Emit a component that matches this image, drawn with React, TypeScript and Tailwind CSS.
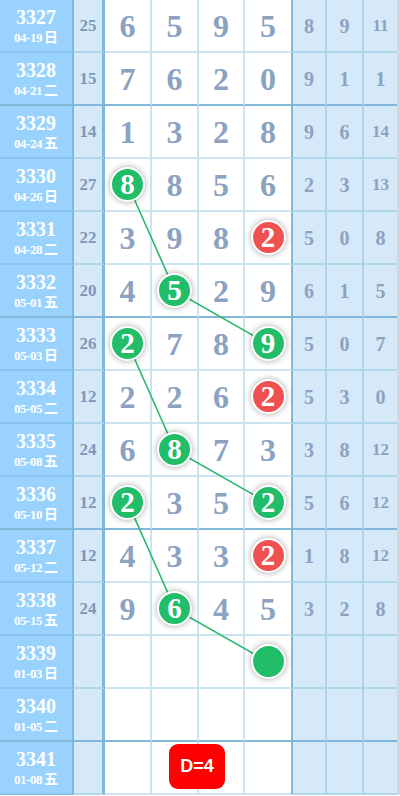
import React from 'react';

type Mark = 'g' | 'r' | 'e' | null;

interface Row {
  id: string;
  date: string;
  week: string;
  miss: string;
  nums: (number | null)[];
  marks: Mark[];
  tail: string[];
}

const rows: Row[] = [
  { id: '3327', date: '04-19', week: '日', miss: '25', nums: [6, 5, 9, 5], marks: [null, null, null, null], tail: ['8', '9', '11'] },
  { id: '3328', date: '04-21', week: '二', miss: '15', nums: [7, 6, 2, 0], marks: [null, null, null, null], tail: ['9', '1', '1'] },
  { id: '3329', date: '04-24', week: '五', miss: '14', nums: [1, 3, 2, 8], marks: [null, null, null, null], tail: ['9', '6', '14'] },
  { id: '3330', date: '04-26', week: '日', miss: '27', nums: [8, 8, 5, 6], marks: ['g', null, null, null], tail: ['2', '3', '13'] },
  { id: '3331', date: '04-28', week: '二', miss: '22', nums: [3, 9, 8, 2], marks: [null, null, null, 'r'], tail: ['5', '0', '8'] },
  { id: '3332', date: '05-01', week: '五', miss: '20', nums: [4, 5, 2, 9], marks: [null, 'g', null, null], tail: ['6', '1', '5'] },
  { id: '3333', date: '05-03', week: '日', miss: '26', nums: [2, 7, 8, 9], marks: ['g', null, null, 'g'], tail: ['5', '0', '7'] },
  { id: '3334', date: '05-05', week: '二', miss: '12', nums: [2, 2, 6, 2], marks: [null, null, null, 'r'], tail: ['5', '3', '0'] },
  { id: '3335', date: '05-08', week: '五', miss: '24', nums: [6, 8, 7, 3], marks: [null, 'g', null, null], tail: ['3', '8', '12'] },
  { id: '3336', date: '05-10', week: '日', miss: '12', nums: [2, 3, 5, 2], marks: ['g', null, null, 'g'], tail: ['5', '6', '12'] },
  { id: '3337', date: '05-12', week: '二', miss: '12', nums: [4, 3, 3, 2], marks: [null, null, null, 'r'], tail: ['1', '8', '12'] },
  { id: '3338', date: '05-15', week: '五', miss: '24', nums: [9, 6, 4, 5], marks: [null, 'g', null, null], tail: ['3', '2', '8'] },
  { id: '3339', date: '01-03', week: '日', miss: '', nums: [null, null, null, null], marks: [null, null, null, 'e'], tail: ['', '', ''] },
  { id: '3340', date: '01-05', week: '二', miss: '', nums: [null, null, null, null], marks: [null, null, null, null], tail: ['', '', ''] },
  { id: '3341', date: '01-08', week: '五', miss: '', nums: [null, null, null, null], marks: [null, null, null, null], tail: ['', '', ''] },
];

// rows that close a group of four get the darker rule
const groupEnds = [1, 5, 9, 13];

const ROW_H = 53;
const colX = [128, 175, 222, 268];

// chains of hits, [rowIndex, col]
const chains: [number, number][][] = [
  [[3, 0], [5, 1], [6, 3]],
  [[6, 0], [8, 1], [9, 3]],
  [[9, 0], [11, 1], [12, 3]],
];

const serif = "font-['Liberation_Serif','Times_New_Roman','Noto_Sans_CJK_SC',serif]";

function Ball({ mark, value }: { mark: Mark; value: number | null }) {
  const bg = mark === 'r' ? 'bg-[#ef5151]' : 'bg-[#22bd69]';
  return (
    <div
      className={`relative z-10 w-[35px] h-[35px] rounded-full border-2 border-white ${bg} shadow-[0_0_6px_rgba(0,0,0,0.35)] flex items-center justify-center text-white text-[29px] font-bold leading-none ${serif}`}
    >
      {mark === 'e' ? '' : value}
    </div>
  );
}

export default function App() {
  return (
    <div className={`relative w-[400px] bg-white border-r-[3px] border-[#cfd8df] ${serif}`}>
      {rows.map((row, i) => {
        const end = groupEnds.includes(i);
        const leftB = end ? 'border-b-[#7fb8d9]' : 'border-b-[#88c3ea]';
        const blueB = end ? 'border-b-[#7fb8d9]' : 'border-b-[#b0d6ec]';
        const whiteB = end ? 'border-b-[#7fb8d9]' : 'border-b-[#cce4f1]';
        return (
          <div
            key={row.id}
            className="relative grid grid-cols-[74px_31px_47px_47px_46px_48px_34px_37px_33px] h-[53px]"
          >
            {/* period + date */}
            <div className={`flex flex-col items-center justify-center bg-[#99d2fc] border-r-2 border-r-[#7fb8d9] border-b-2 ${leftB} text-white font-bold`}>
              <div className="text-[20px] leading-[24px]">{row.id}</div>
              <div className="flex items-center gap-[2px] leading-[18px]">
                <span className="text-[13px] tracking-[-0.5px]">{row.date}</span>
                <span className="text-[14px]">{row.week}</span>
              </div>
            </div>

            {/* missing count */}
            <div className={`flex items-center justify-center bg-[#d6e9f9] border-r-[3px] border-r-[#7fb8d9] border-b-2 ${blueB} text-[#7d97b9] text-[17px] font-bold`}>
              {row.miss}
            </div>

            {/* draw digits */}
            {row.nums.map((n, c) => (
              <div
                key={c}
                className={`flex items-center justify-center border-b-2 ${whiteB} ${
                  c === 3 ? 'border-r-2 border-r-[#7fb8d9]' : 'border-r-2 border-r-[#cce4f1]'
                } text-[#8ba2c0] text-[32px] font-bold`}
              >
                {row.marks[c] ? <Ball mark={row.marks[c]} value={n} /> : n}
              </div>
            ))}

            {/* tail stats */}
            {row.tail.map((t, c) => (
              <div
                key={c}
                className={`flex items-center justify-center bg-[#d6e9f9] border-b-2 ${blueB} ${
                  c < 2 ? 'border-r-2 border-r-[#acd4eb]' : ''
                } text-[#8ba2c0] font-bold ${t.length > 1 ? 'text-[17px]' : 'text-[20px]'}`}
              >
                {t}
              </div>
            ))}

            {row.id === '3341' && (
              <div className="absolute left-[169px] top-[2px] w-[56px] h-[45px] rounded-[9px] bg-[#ff0000] flex items-center justify-center text-white text-[18px] font-bold font-['Liberation_Sans',Arial,sans-serif]">
                D=4
              </div>
            )}
          </div>
        );
      })}

      {/* connecting lines */}
      <svg className="absolute left-0 top-0 pointer-events-none" width={400} height={796}>
        {chains.map((ch, k) => (
          <polyline
            key={k}
            points={ch.map(([r, c]) => `${colX[c]},${r * ROW_H + 26}`).join(' ')}
            fill="none"
            stroke="#27b96b"
            strokeWidth={1.6}
          />
        ))}
      </svg>
    </div>
  );
}
